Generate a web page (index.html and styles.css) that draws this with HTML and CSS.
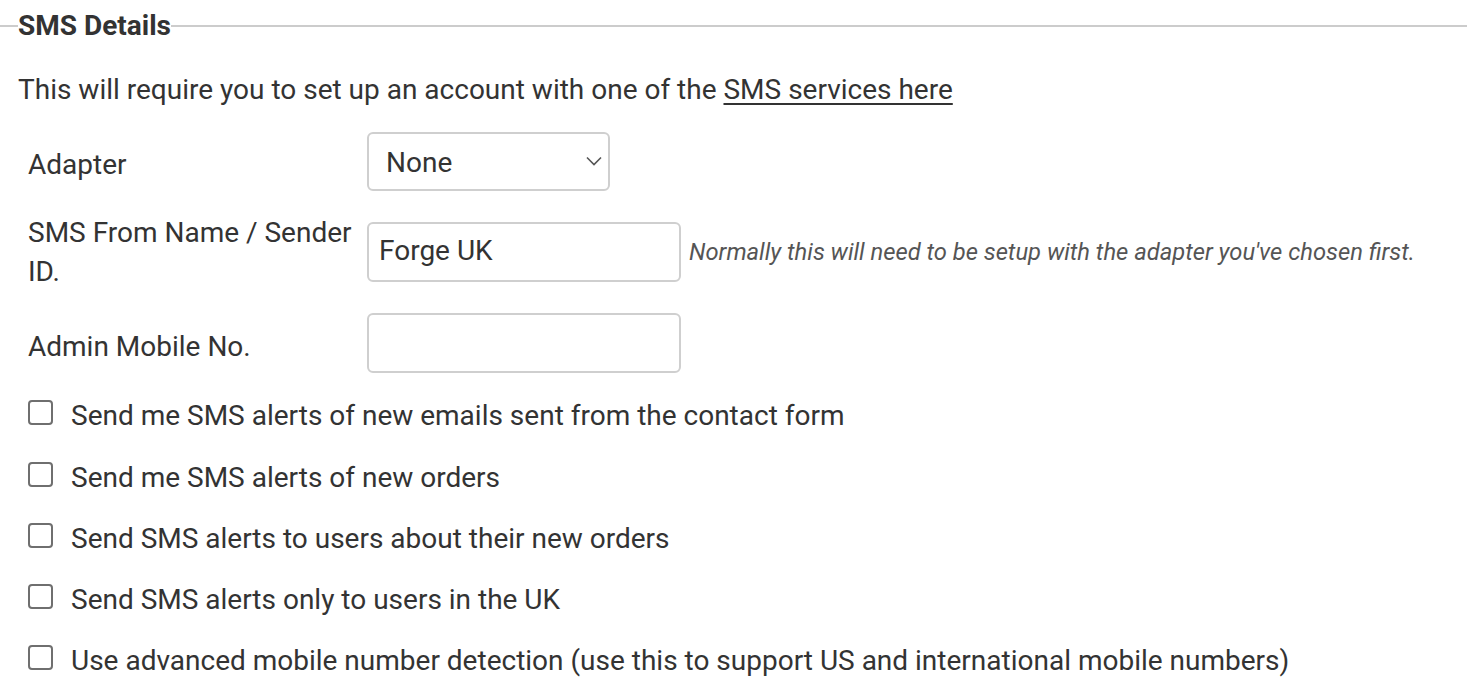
FILE: index.html
```html
<!DOCTYPE html>
<html lang="en">
<head>
<meta charset="utf-8">
<title>SMS Details</title>
<link rel="stylesheet" href="styles.css">
</head>
<body>
<fieldset class="panel">
  <legend class="panel-title">SMS Details</legend>
  <p class="intro">This will require you to set up an account with one of the <a href="#" class="link">SMS services here</a></p>
  <div class="form">
    <div class="field-grid">
      <label class="field-label" for="adapter">Adapter</label>
      <div class="field-control">
        <div class="select-wrap">
          <select id="adapter" class="select"><option>None</option></select>
          <svg class="chevron" width="16" height="10" viewBox="0 0 16 10"><path d="M1 1.5 L8 8.5 L15 1.5" fill="none" stroke="#555" stroke-width="1.6"/></svg>
        </div>
      </div>
      <label class="field-label field-label-wrap" for="sender">SMS From Name / Sender ID.</label>
      <div class="field-control">
        <input id="sender" class="text-input" type="text" value="Forge UK">
        <span class="help">Normally this will need to be setup with the adapter you've chosen first.</span>
      </div>
      <label class="field-label" for="mobile">Admin Mobile No.</label>
      <div class="field-control">
        <input id="mobile" class="text-input" type="text" value="">
      </div>
    </div>
    <label class="check-row"><input type="checkbox" class="check"><span class="check-text">Send me SMS alerts of new emails sent from the contact form</span></label>
    <label class="check-row"><input type="checkbox" class="check"><span class="check-text">Send me SMS alerts of new orders</span></label>
    <label class="check-row"><input type="checkbox" class="check"><span class="check-text">Send SMS alerts to users about their new orders</span></label>
    <label class="check-row"><input type="checkbox" class="check"><span class="check-text">Send SMS alerts only to users in the UK</span></label>
    <label class="check-row"><input type="checkbox" class="check"><span class="check-text">Use advanced mobile number detection (use this to support US and international mobile numbers)</span></label>
  </div>
</fieldset>
</body>
</html>
```
FILE: styles.css
```css
html, body {
  margin: 0;
  padding: 0;
  background: #fff;
}
body {
  font-family: Roboto, "Liberation Sans", Arial, sans-serif;
  font-size: 28px;
  line-height: 39px;
  color: #333;
  overflow: hidden;
}
.panel {
  margin: 6px 1px 0 0;
  padding: 25px 0 0 18px;
  border: none;
  border-top: 2px solid #cccccc;
  min-width: 0;
}
.panel-title {
  padding: 0;
  font-weight: 700;
  color: #333;
}
.intro {
  margin: 0;
}
.link {
  color: #333;
  text-decoration: underline;
  text-underline-offset: 4px;
  text-decoration-thickness: 2px;
}
.form {
  display: flex;
  flex-direction: column;
  gap: 22.25px;
  padding-left: 10px;
  margin-top: 23px;
}
.field-grid {
  display: grid;
  grid-template-columns: 339px 1fr;
  row-gap: 22px;
  align-items: center;
  margin-bottom: -2px;
}
.field-label {
  padding-right: 4px;
  padding-top: 3px;
  margin-bottom: -3px;
}
.field-label-wrap {
  padding-top: 0;
  margin-bottom: 0;
}
.field-control {
  display: flex;
  align-items: center;
  gap: 8px;
}
.select-wrap {
  position: relative;
  width: 243px;
}
.select {
  appearance: none;
  -webkit-appearance: none;
  display: block;
  width: 243px;
  height: 59px;
  box-sizing: border-box;
  border: 2px solid #cfcfcf;
  border-radius: 6px;
  background: #fff;
  font: inherit;
  color: #333;
  padding: 3px 40px 0 17px;
  line-height: 52px;
}
.chevron {
  position: absolute;
  right: 8px;
  top: 24px;
  pointer-events: none;
}
.text-input {
  display: block;
  width: 314px;
  height: 60px;
  box-sizing: border-box;
  border: 2px solid #cfcfcf;
  border-radius: 6px;
  font: inherit;
  color: #333;
  padding: 0 10px 3px;
  background: #fff;
  outline: none;
}
.help {
  font-size: 23.75px;
  font-style: italic;
  color: #555;
  white-space: nowrap;
}
.check-row {
  display: flex;
  align-items: center;
  gap: 18px;
}
.check-text {
  padding-top: 3px;
  margin-bottom: -3px;
}
.check {
  appearance: none;
  -webkit-appearance: none;
  margin: 0;
  width: 25px;
  height: 25px;
  box-sizing: border-box;
  border: 2px solid #6f6f6f;
  border-radius: 4px;
  background: #fff;
  flex: none;
}
```
